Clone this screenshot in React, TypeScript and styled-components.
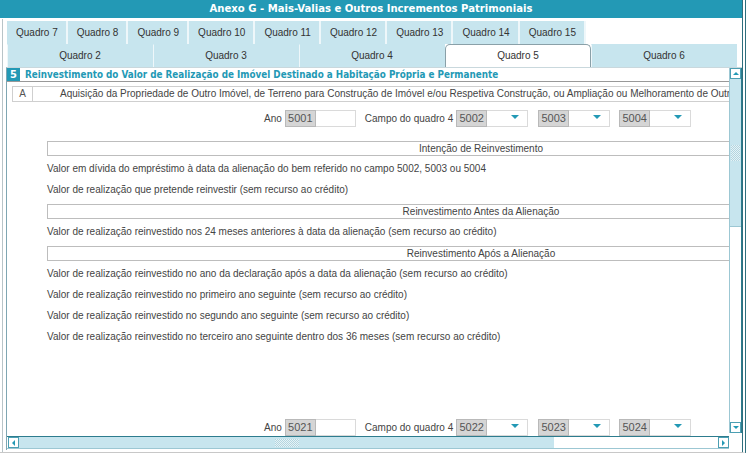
import * as React from "react";
import styled, { createGlobalStyle } from "styled-components";

const GlobalStyle = createGlobalStyle`
  html, body {
    margin: 0;
    padding: 0;
    background: #ffffff;
  }
  body {
    font-family: "Liberation Sans", Arial, sans-serif;
    font-size: 10px;
    color: #444;
  }
`;

const teal = "#2399b5";
const lightBlue = "#c7e5ee";

const Frame = styled.div`
  width: 742px;
  height: 452px;
  border-right: 4px double #2f6f7e;
  border-bottom: 1px solid #c8c8c8;
  display: flex;
  flex-direction: column;
  overflow: hidden;
`;

const TitleBar = styled.div`
  height: 18px;
  background: ${teal};
  color: #fff;
  font-family: "DejaVu Sans Condensed", "DejaVu Sans", sans-serif;
  font-weight: bold;
  font-size: 11.2px;
  line-height: 18px;
  text-align: center;
  border-bottom: 1px solid #ffffff;
`;

const Body = styled.div`
  flex: 1;
  display: flex;
  flex-direction: column;
  border-left: 1px solid #b8c4c8;
  margin-left: 2px;
  padding: 2px 0 4px 2px;
`;

const TabRow = styled.div`
  display: flex;
  padding-left: 2px;
  height: 23px;
`;

const SmallTab = styled.div`
  background: ${lightBlue};
  border-right: 2px solid #eef7fa;
  padding: 0 8px 0 9px;
  line-height: 23px;
  color: #333;
  white-space: nowrap;
`;

const WideTabRow = styled.div`
  display: grid;
  grid-template-columns: repeat(5, 146px);
  padding-left: 2px;
  height: 23px;
`;

const WideTab = styled.div<{ $active?: boolean }>`
  background: ${(p) => (p.$active ? "#ffffff" : lightBlue)};
  border-left: 1px solid ${(p) => (p.$active ? "#8aa0a8" : "#eef7fa")};
  border-top: 1px solid ${(p) => (p.$active ? "#8aa0a8" : "transparent")};
  border-right: 1px solid ${(p) => (p.$active ? "#8aa0a8" : "transparent")};
  border-top-left-radius: ${(p) => (p.$active ? "5px" : "0")};
  border-top-right-radius: ${(p) => (p.$active ? "5px" : "0")};
  text-align: center;
  line-height: 22px;
  color: #333;
`;

const Panel = styled.div`
  flex: 1;
  margin-left: 1px;
  width: 736px;
  border-left: 1px solid #7fa6b2;
  border-top: 1px solid #c9d8dd;
  display: grid;
  grid-template-columns: 722px 13px;
  grid-template-rows: 1fr 14px;
  min-height: 0;
`;

const Viewport = styled.div`
  overflow: hidden;
`;

const Content = styled.div`
  width: 940px;
`;

const SectionHeader = styled.div`
  display: flex;
  align-items: center;
  height: 13px;
  width: 722px;
  border-bottom: 1px solid #999;
`;

const SectionNumber = styled.span`
  background: ${teal};
  color: #fff;
  font-family: "DejaVu Sans Condensed", "DejaVu Sans", sans-serif;
  font-weight: bold;
  font-size: 11px;
  width: 13px;
  height: 13px;
  line-height: 13px;
  text-align: center;
  margin-right: 5px;
`;

const SectionTitle = styled.span`
  color: ${teal};
  font-family: "DejaVu Sans Condensed", "DejaVu Sans", sans-serif;
  font-weight: bold;
  font-size: 9.8px;
  white-space: nowrap;
`;

const LetterRow = styled.div`
  display: flex;
  margin: 4px 0 0 5px;
  height: 14px;
  border: 1px solid #cfcfcf;
  line-height: 14px;
  white-space: nowrap;
`;

const LetterCell = styled.div`
  width: 19px;
  text-align: center;
  border-right: 1px solid #cfcfcf;
  color: #555;
`;

const LetterText = styled.div`
  padding-left: 27px;
`;

const FieldRow = styled.div<{ $top: number }>`
  display: flex;
  align-items: center;
  height: 17px;
  margin-top: ${(p) => p.$top}px;
  padding-left: 257px;
  white-space: nowrap;
`;

const FieldLabel = styled.span<{ $gap?: number }>`
  margin-left: ${(p) => p.$gap ?? 0}px;
  margin-right: 3px;
  color: #444;
`;

const Code = styled.span<{ $gap?: number }>`
  margin-left: ${(p) => p.$gap ?? 0}px;
  width: 29px;
  height: 15px;
  line-height: 15px;
  background: #d5d5d5;
  border: 1px solid #b9b9b9;
  color: #555;
  text-align: center;
  font-size: 11px;
`;

const TextBox = styled.span`
  width: 39px;
  height: 15px;
  border: 1px solid #dadada;
  border-left: none;
  background: #fff;
`;

const SelectBox = styled.span`
  height: 15px;
  border: 1px solid #dadada;
  border-left: none;
  background: #fff;
  display: flex;
  align-items: center;
  justify-content: flex-end;
  padding-right: 8px;
  width: 32px;
`;

const Arrow = styled.span`
  width: 0;
  height: 0;
  border-left: 4px solid transparent;
  border-right: 4px solid transparent;
  border-top: 4px solid ${teal};
  margin-top: -3px;
`;

const Bar = styled.div<{ $top?: number }>`
  margin: ${(p) => p.$top ?? 4}px 0 2px 40px;
  width: 866px;
  height: 13px;
  line-height: 13px;
  border-top: 1px solid #bdbdbd;
  border-bottom: 1px solid #bdbdbd;
  border-left: 1px solid #bdbdbd;
  text-align: center;
  color: #444;
`;

const Line = styled.div`
  margin-left: 40px;
  height: 21px;
  line-height: 21px;
  white-space: nowrap;
`;

const Spacer = styled.div<{ $h: number }>`
  height: ${(p) => p.$h}px;
`;

const VScroll = styled.div`
  display: flex;
  flex-direction: column;
  border-left: 1px solid #9cc7d3;
  border-right: 1px solid #2d7c8e;
  background: #fff;
  margin-bottom: 3px;
`;

const ScrollButton = styled.div`
  width: 11px;
  height: 11px;
  display: flex;
  align-items: center;
  justify-content: center;
  border: 1px solid #4c9fb3;
  box-sizing: border-box;
  background: #fff;
  flex-shrink: 0;
`;

const TriUp = styled.span`
  border-left: 3px solid transparent;
  border-right: 3px solid transparent;
  border-bottom: 3px solid ${teal};
`;

const TriDown = styled.span`
  border-left: 3px solid transparent;
  border-right: 3px solid transparent;
  border-top: 3px solid ${teal};
`;

const TriLeft = styled.span`
  border-top: 3px solid transparent;
  border-bottom: 3px solid transparent;
  border-right: 3px solid ${teal};
`;

const TriRight = styled.span`
  border-top: 3px solid transparent;
  border-bottom: 3px solid transparent;
  border-left: 3px solid ${teal};
`;

const VThumb = styled.div`
  height: 147px;
  background: ${lightBlue};
  border-bottom: 1px solid #9cc7d3;
  display: flex;
  align-items: center;
  justify-content: center;
`;

const Grip = styled.div<{ $w: number; $h: number }>`
  width: ${(p) => p.$w}px;
  height: ${(p) => p.$h}px;
  background-image: conic-gradient(#e6f3f7 25%, #b3d5df 0 50%, #e6f3f7 0 75%, #b3d5df 0);
  background-size: 2px 2px;
`;

const Track = styled.div`
  flex: 1;
`;

const HScroll = styled.div`
  display: flex;
  align-items: center;
  padding-left: 1px;
  border-top: 1px solid #2d7c8e;
  border-bottom: 1px solid #9cc7d3;
  height: 13px;
  box-sizing: border-box;
`;

const HThumb = styled.div`
  width: 535px;
  height: 100%;
  background: ${lightBlue};
  display: flex;
  align-items: center;
  justify-content: center;
`;

const HTrack = styled.div`
  flex: 1;
  height: 100%;
  background: #fff;
`;

const Corner = styled.div`
  background: #fff;
`;

const smallTabs = ["Quadro 7", "Quadro 8", "Quadro 9", "Quadro 10", "Quadro 11", "Quadro 12", "Quadro 13", "Quadro 14", "Quadro 15"];
const wideTabs = ["Quadro 2", "Quadro 3", "Quadro 4", "Quadro 5", "Quadro 6"];

const Fields: React.FC<{ codes: string[]; top: number }> = ({ codes, top }) => (
  <FieldRow $top={top}>
    <FieldLabel>Ano</FieldLabel>
    <Code>{codes[0]}</Code>
    <TextBox />
    <FieldLabel $gap={9}>Campo do quadro 4</FieldLabel>
    <Code>{codes[1]}</Code>
    <SelectBox><Arrow /></SelectBox>
    <Code $gap={10}>{codes[2]}</Code>
    <SelectBox><Arrow /></SelectBox>
    <Code $gap={9}>{codes[3]}</Code>
    <SelectBox><Arrow /></SelectBox>
  </FieldRow>
);

export default function App() {
  return (
    <>
      <GlobalStyle />
      <Frame>
        <TitleBar>Anexo G - Mais-Valias e Outros Incrementos Patrimoniais</TitleBar>
        <Body>
          <TabRow>
            {smallTabs.map((t) => (
              <SmallTab key={t}>{t}</SmallTab>
            ))}
          </TabRow>
          <WideTabRow>
            {wideTabs.map((t) => (
              <WideTab key={t} $active={t === "Quadro 5"}>{t}</WideTab>
            ))}
          </WideTabRow>
          <Panel>
            <Viewport>
              <Content>
                <SectionHeader>
                  <SectionNumber>5</SectionNumber>
                  <SectionTitle>
                    Reinvestimento do Valor de Realização de Imóvel Destinado a Habitação Própria e Permanente
                  </SectionTitle>
                </SectionHeader>
                <LetterRow>
                  <LetterCell>A</LetterCell>
                  <LetterText>
                    Aquisição da Propriedade de Outro Imóvel, de Terreno para Construção de Imóvel e/ou Respetiva Construção, ou Ampliação ou Melhoramento de Outro Imóvel
                  </LetterText>
                </LetterRow>
                <Fields codes={["5001", "5002", "5003", "5004"]} top={8} />
                <Bar $top={14}>Intenção de Reinvestimento</Bar>
                <Line>Valor em dívida do empréstimo à data da alienação do bem referido no campo 5002, 5003 ou 5004</Line>
                <Line>Valor de realização que pretende reinvestir (sem recurso ao crédito)</Line>
                <Bar>Reinvestimento Antes da Alienação</Bar>
                <Line>Valor de realização reinvestido nos 24 meses anteriores à data da alienação (sem recurso ao crédito)</Line>
                <Bar>Reinvestimento Após a Alienação</Bar>
                <Line>Valor de realização reinvestido no ano da declaração após a data da alienação (sem recurso ao crédito)</Line>
                <Line>Valor de realização reinvestido no primeiro ano seguinte (sem recurso ao crédito)</Line>
                <Line>Valor de realização reinvestido no segundo ano seguinte (sem recurso ao crédito)</Line>
                <Line>Valor de realização reinvestido no terceiro ano seguinte dentro dos 36 meses (sem recurso ao crédito)</Line>
                <Spacer $h={72} />
                <Fields codes={["5021", "5022", "5023", "5024"]} top={0} />
              </Content>
            </Viewport>
            <VScroll>
              <ScrollButton><TriUp /></ScrollButton>
              <VThumb>
                <Grip $w={9} $h={16} />
              </VThumb>
              <Track />
              <ScrollButton><TriDown /></ScrollButton>
            </VScroll>
            <HScroll>
              <ScrollButton><TriLeft /></ScrollButton>
              <HThumb>
                <Grip $w={24} $h={8} />
              </HThumb>
              <HTrack />
              <ScrollButton><TriRight /></ScrollButton>
            </HScroll>
            <Corner />
          </Panel>
        </Body>
      </Frame>
    </>
  );
}
